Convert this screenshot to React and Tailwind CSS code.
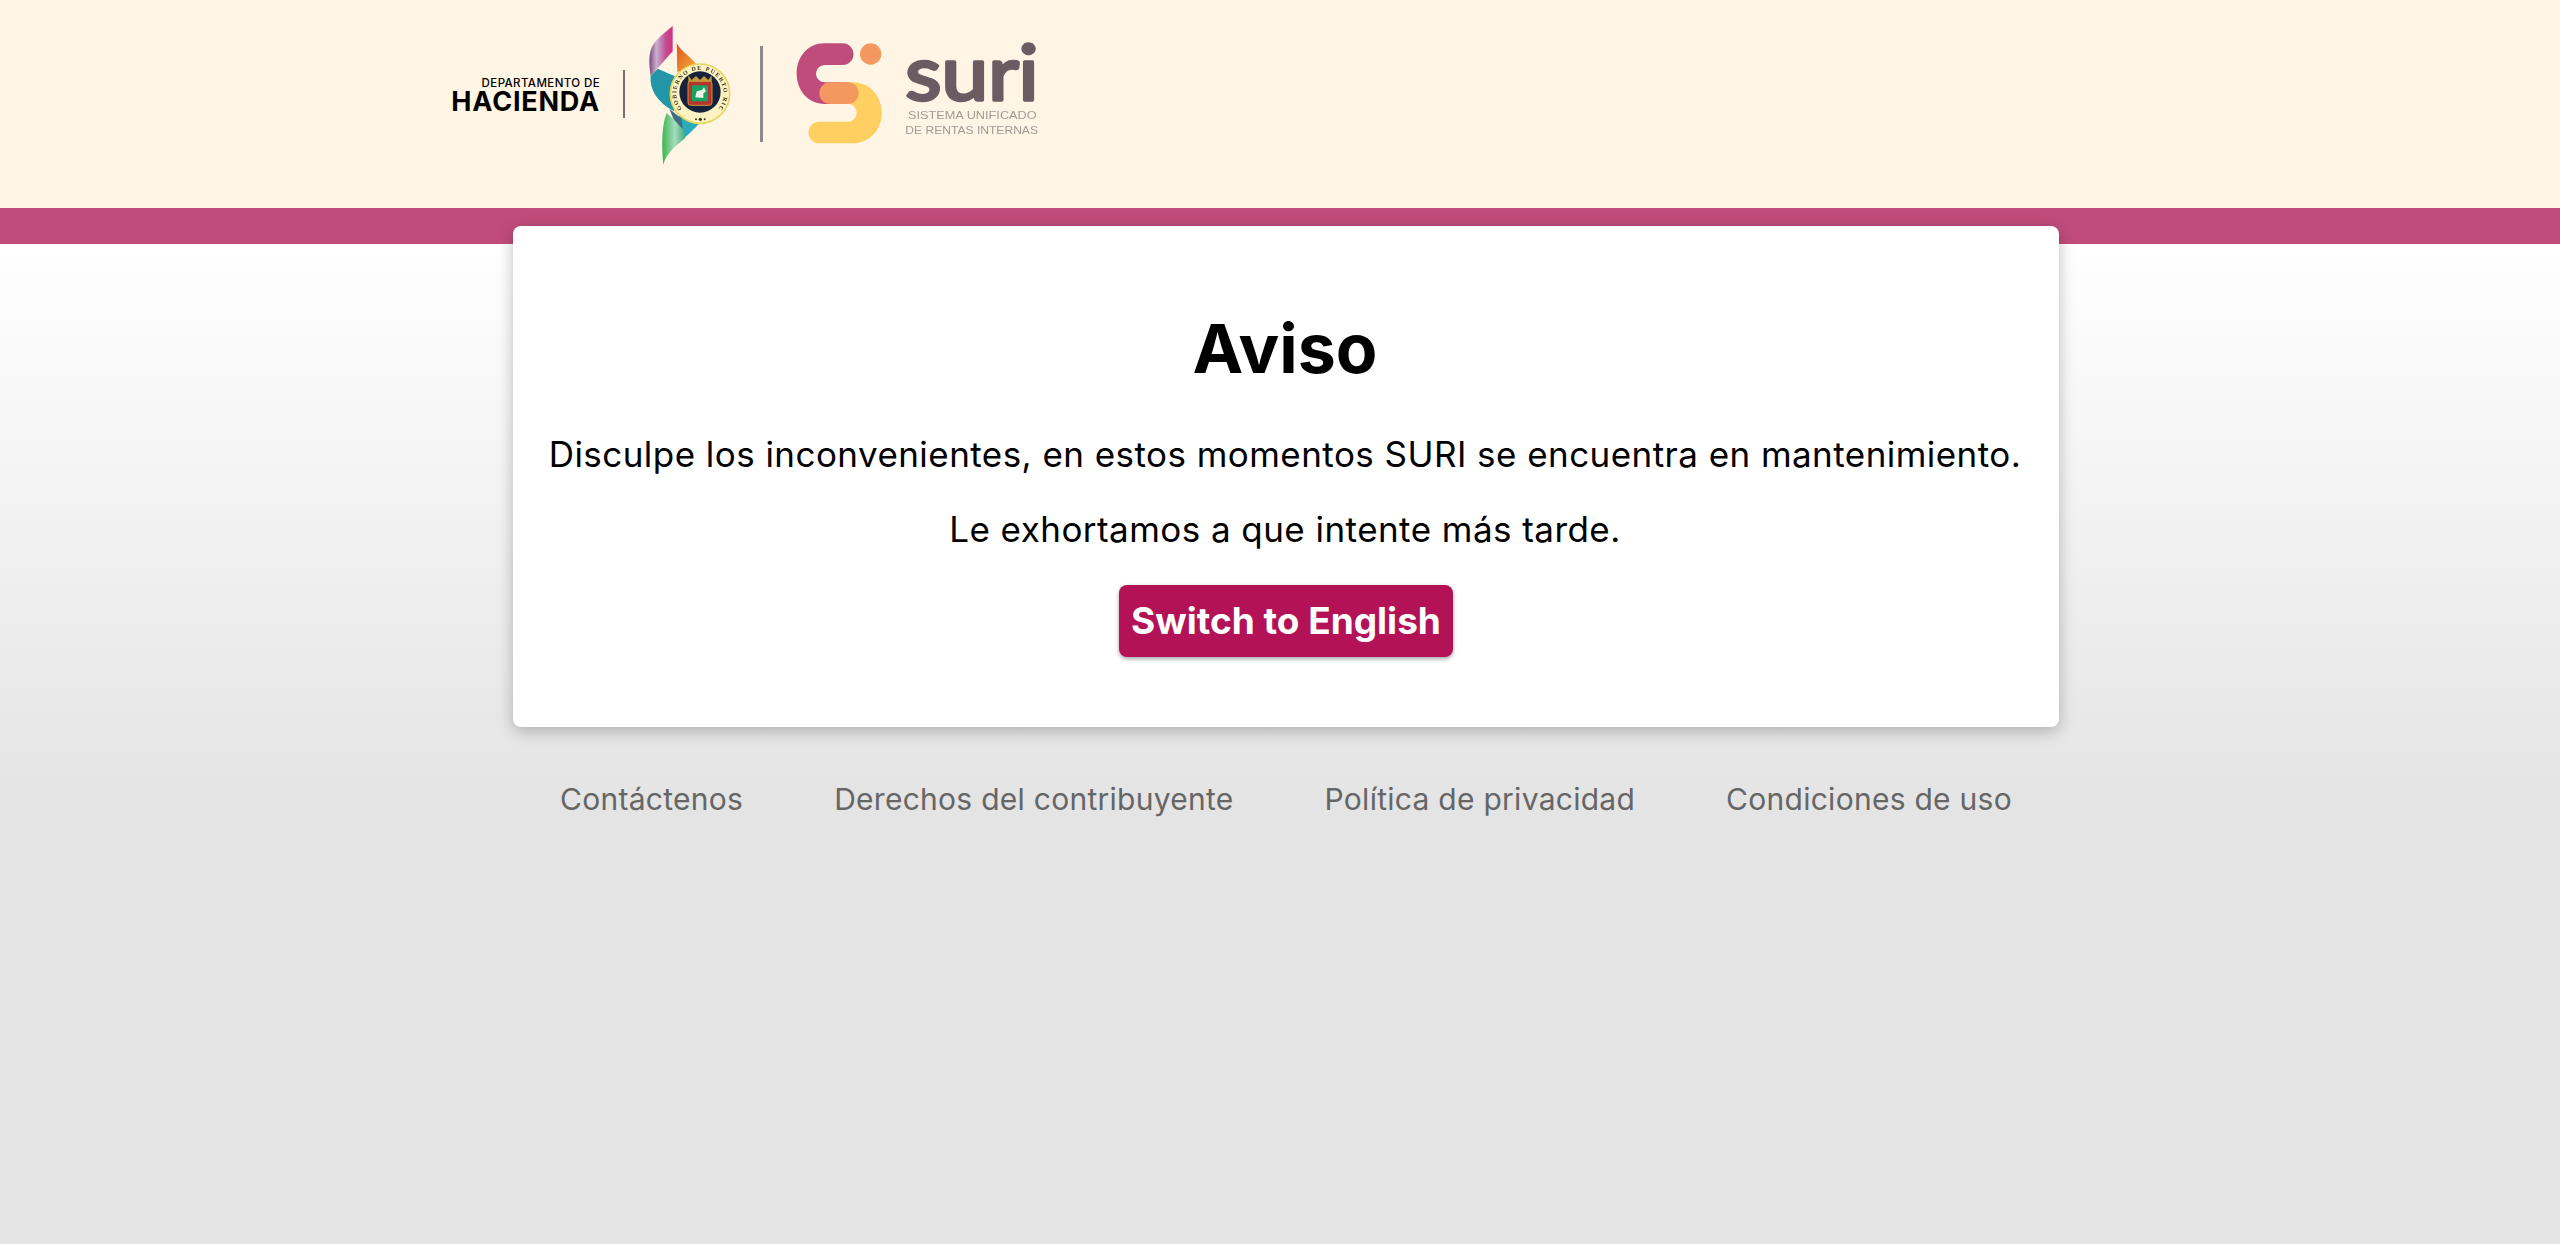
const font = { fontFamily: '"Inter", "Liberation Sans", sans-serif' };

function Logo() {
  return (
    <div className="flex items-center">
      <div className="mt-[3px] flex w-[152px] flex-col items-end text-black">
        <span className="text-[11.5px] leading-[12px] font-medium tracking-[0.4px] whitespace-nowrap">DEPARTAMENTO DE</span>
        <span className="text-[27px] leading-[26px] font-bold tracking-[0.8px] whitespace-nowrap">HACIENDA</span>
      </div>
      <div className="ml-[23px] h-[48px] w-[2px] bg-[#77706a]"></div>
      <svg className="ml-[-5px] mt-[-4px] h-[160px] w-[160px] shrink-0 blur-[0.4px]" viewBox="0 0 480 480">
        <defs>
          <linearGradient id="mag" x1="0" x2="1" y1="0" y2="0">
            <stop offset="0" stopColor="#7c4a78" />
            <stop offset="0.3" stopColor="#c8b0cf" />
            <stop offset="0.7" stopColor="#c24f93" />
            <stop offset="1" stopColor="#d82c7c" />
          </linearGradient>
          <linearGradient id="org" x1="0" x2="1" y1="0" y2="1">
            <stop offset="0" stopColor="#e0541f" />
            <stop offset="1" stopColor="#f2b23a" />
          </linearGradient>
          <linearGradient id="grn" x1="0" x2="1" y1="0" y2="0">
            <stop offset="0" stopColor="#3fb54f" />
            <stop offset="0.55" stopColor="#a5dcc0" />
            <stop offset="1" stopColor="#45a97a" />
          </linearGradient>
        </defs>
        <path d="M158 42C135 62 100 85 92 115C85 140 89 170 92 192L158 118Z" fill="url(#mag)" />
        <path d="M170 93C172 120 170 150 172 180L232 162C216 135 186 122 170 93Z" fill="url(#org)" />
        <path d="M113 170L92 192C88 232 112 272 162 298L185 250L170 195Z" fill="#2296a8" />
        <path d="M180 310L236 336C222 352 205 368 190 380L150 340Z" fill="#2aaabb" />
        <path d="M140 303C126 335 124 400 130 458C140 420 172 398 196 378L186 345Z" fill="url(#grn)" />
        <path d="M148 290L185 320L188 352L160 320Z" fill="#3f6f7e" />
        <circle cx="240" cy="245" r="89" fill="#fdf3c2" stroke="#e6d65f" strokeWidth="5" />
        <path id="ringTop" d="M186 291A71 71 0 1 1 294 291" fill="none" />
        <text fontFamily="Liberation Serif, serif" fontSize="18" fontWeight="700" fill="#3a3320">
          <textPath href="#ringTop" textLength="340">GOBIERNO DE PUERTO RICO</textPath>
        </text>
        <circle cx="240" cy="240" r="62" fill="#17213c" />
        <path d="M205 190L215 204L228 192L240 204L252 192L265 204L275 190V210H205Z" fill="#c79a3a" />
        <rect x="204" y="208" width="72" height="72" rx="8" fill="#b5342c" stroke="#c79a3a" strokeWidth="3" />
        <rect x="216" y="220" width="48" height="48" fill="#17a364" />
        <path d="M226 256L230 238L246 234L252 226L258 238L250 244L250 258Z" fill="#eef5ea" />
        <circle cx="228" cy="322" r="3" fill="#3a3320" />
        <circle cx="241" cy="322" r="5" fill="#3a3320" />
        <circle cx="254" cy="322" r="3" fill="#3a3320" />
      </svg>
      <div className="ml-[-20px] h-[96px] w-[3px] bg-[#8d8a88]"></div>
      <svg className="ml-[17px] mt-[-8px] h-[120px] w-[270px] shrink-0 blur-[0.4px]" viewBox="0 0 810 360">
        <path d="M188 40a32.5 32.5 0 0 1 0 65H134a26 26 0 0 0 0 52H210V222H134C84 222 50 182 50 130C50 80 84 40 134 40Z" fill="#c04c7b" />
        <path d="M200 157H215C270 157 305 197 305 248C305 300 270 340 215 340H118a32.5 32.5 0 0 1 0-65H208a27 27 0 0 0 0-53H200Z" fill="#ffcf62" />
        <rect x="118" y="157" width="118" height="65" rx="32.5" fill="#f5985f" />
        <circle cx="272" cy="72" r="32" fill="#f5985f" />
        <text x="376" y="210" textLength="400" lengthAdjust="spacingAndGlyphs" fontFamily="Lato, sans-serif" fontSize="225" fontWeight="400" fill="#6b5b62" stroke="#6b5b62" strokeWidth="10" strokeLinejoin="round">suri</text>
        <text x="384" y="268" textLength="386" lengthAdjust="spacingAndGlyphs" fontFamily="Liberation Sans, sans-serif" fontSize="35" fill="#a39a98">SISTEMA UNIFICADO</text>
        <text x="376" y="312" textLength="398" lengthAdjust="spacingAndGlyphs" fontFamily="Liberation Sans, sans-serif" fontSize="35" fill="#a39a98">DE RENTAS INTERNAS</text>
      </svg>
    </div>
  );
}

export default function App() {
  return (
    <div
      className="flex min-h-[1244px] flex-col bg-[linear-gradient(to_bottom,#ffffff_244px,#e4e4e4_805px)]"
      style={font}
    >
      <header className="flex h-[208px] items-center bg-[#fff5e4] pb-5 pl-[448px]">
        <Logo />
      </header>
      <div className="h-[36px] bg-[#c04c7b]"></div>
      <main className="mt-[-18px] flex flex-col items-center pl-3">
        <section className="flex h-[501px] w-[1546px] flex-col items-center rounded-lg bg-white pt-[88px] shadow-[0_4px_16px_rgba(0,0,0,0.25)]">
          <h1 className="mr-[2px] text-[68px] leading-[68px] font-bold text-black">Aviso</h1>
          <p className="mr-[2px] mt-[50px] text-[35px] leading-[44px] tracking-[0.45px] whitespace-nowrap text-black">
            Disculpe los inconvenientes, en estos momentos SURI se encuentra en mantenimiento.
          </p>
          <p className="mr-[2px] mt-[31px] text-[35px] leading-[44px] tracking-[0.45px] text-black">Le exhortamos a que intente más tarde.</p>
          <button className="mt-[34px] h-[72px] w-[334px] rounded-lg bg-[#b31356] text-[37px] font-bold text-white shadow-[0_2px_4px_rgba(0,0,0,0.35)]">
            Switch to English
          </button>
        </section>
        <nav className="mt-[52px] flex items-center gap-[91px] text-[30px] leading-[40px] tracking-[0.27px] text-[#666666]">
          <a>Contáctenos</a>
          <a>Derechos del contribuyente</a>
          <a>Política de privacidad</a>
          <a>Condiciones de uso</a>
        </nav>
      </main>
    </div>
  );
}
